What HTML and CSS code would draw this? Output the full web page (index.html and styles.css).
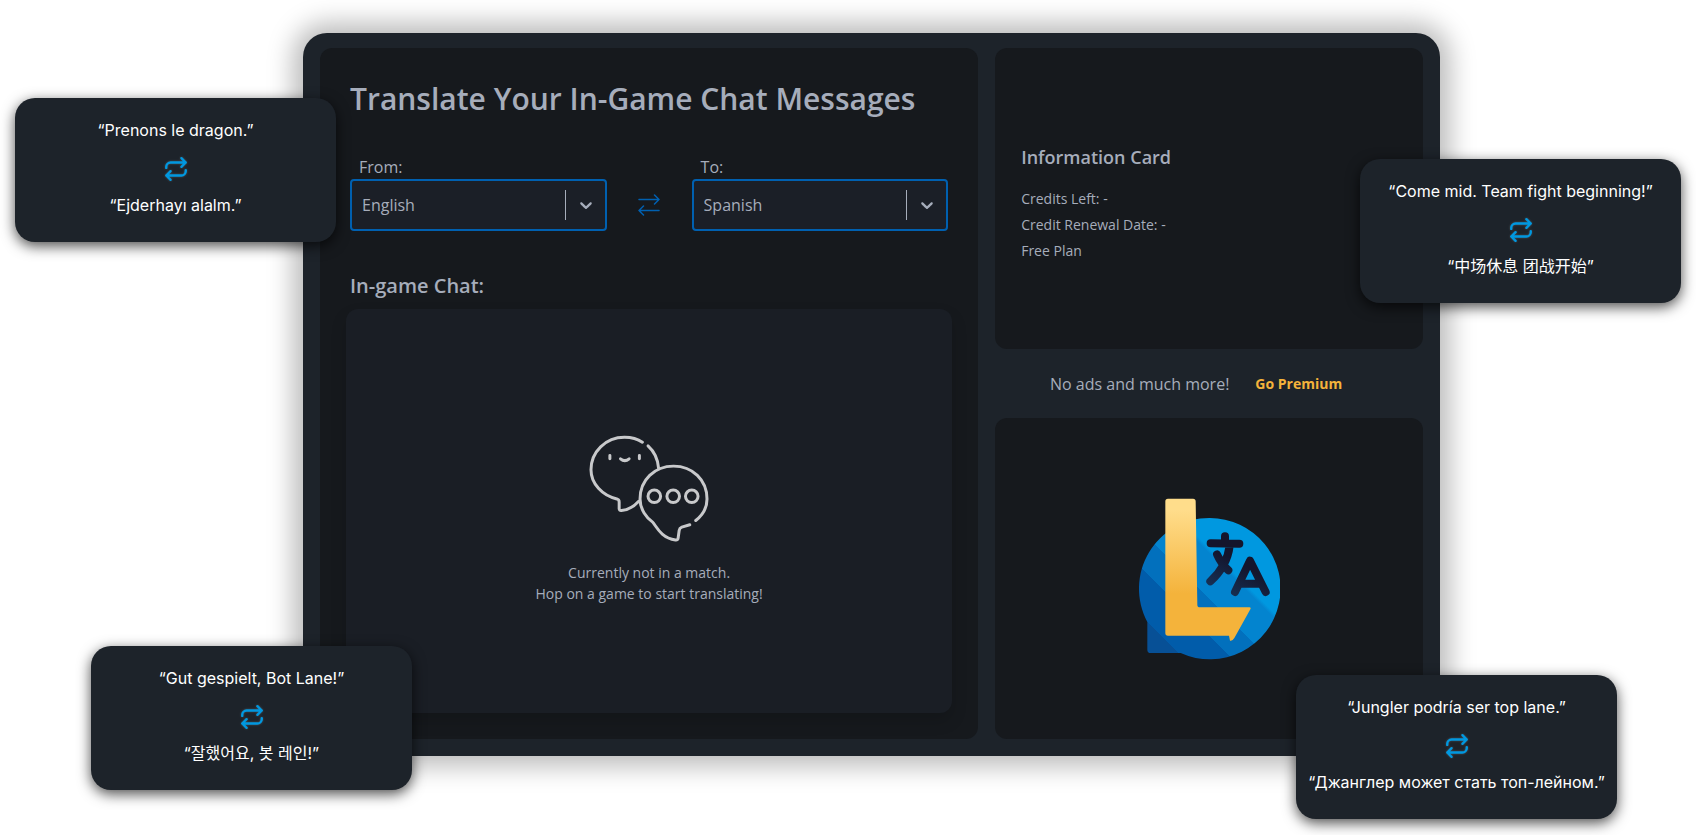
FILE: index.html
```html
<!DOCTYPE html>
<html lang="en">
<head>
  <meta charset="UTF-8" />
  <meta name="viewport" content="width=device-width, initial-scale=1.0" />
  <title>Translate Your In-Game Chat Messages</title>
  <link rel="stylesheet" href="styles.css">
</head>
<body>
  <!-- shared icons -->
  <svg class="sprite" aria-hidden="true">
    <symbol id="icon-repeat" viewBox="0 0 24 24">
      <path d="m17 2 4 4-4 4M3 11v-1a4 4 0 0 1 4-4h14M7 22l-4-4 4-4M21 13v1a4 4 0 0 1-4 4H3" fill="none" stroke="currentColor" stroke-width="2.2" stroke-linecap="round" stroke-linejoin="round"/>
    </symbol>
    <symbol id="icon-chevron" viewBox="0 0 20 20">
      <path fill="currentColor" d="M4.516 7.548c0.436-0.446 1.043-0.481 1.576 0l3.908 3.747 3.908-3.747c0.533-0.481 1.141-0.446 1.574 0 0.436 0.445 0.408 1.197 0 1.615-0.406 0.418-4.695 4.502-4.695 4.502-0.217 0.223-0.502 0.335-0.787 0.335s-0.57-0.112-0.789-0.335c0 0-4.287-4.084-4.695-4.502s-0.436-1.17 0-1.615z"/>
    </symbol>
  </svg>

  <div class="hero">
    <div class="app">
      <main class="panel translate">
        <h1>Translate Your In-Game Chat Messages</h1>

        <form class="languages">
          <div class="field">
            <label for="from">From:</label>
            <div class="select-box">
              <select id="from">
                <option>English</option>
                <option>Spanish</option>
              </select>
              <svg class="chevron" aria-hidden="true"><use href="#icon-chevron"/></svg>
            </div>
          </div>
          <button type="button" class="swap" aria-label="Swap languages">
            <svg viewBox="0 0 22 22" fill="none" stroke="currentColor" stroke-width="1.5" stroke-linecap="round" stroke-linejoin="round">
              <path d="M1 5.500h20M16.500 1l4.500 4.500-4.500 4.500M21 16.500H1M5.500 12L1 16.500 5.500 21"/>
            </svg>
          </button>
          <div class="field">
            <label for="to">To:</label>
            <div class="select-box">
              <select id="to">
                <option>Spanish</option>
                <option>English</option>
              </select>
              <svg class="chevron" aria-hidden="true"><use href="#icon-chevron"/></svg>
            </div>
          </div>
        </form>

        <h2>In-game Chat:</h2>
        <div class="chat">
          <svg class="bubbles" viewBox="88 73 362 324" fill="none" stroke="currentColor" stroke-width="9" stroke-linecap="round" stroke-linejoin="round" aria-hidden="true">
            <path d="M249 97C232 85 214 82 195 82C138 82 94 126 94 180C94 222 128 258 172 268Q179 270 179 277V297Q179 304 186 303Q216 300 238 275"/>
            <path d="M266 108Q295 134 298 176"/>
            <path d="M410 333C432 316 444 292 444 268C444 210 400 169 343 169C286 169 242 210 242 268C242 300 262 325 280 338C292 352 305 385 349 392Q356 393 357 385L360 363Q361 356 368 353L392 346"/>
            <circle cx="285" cy="260" r="19"/>
            <circle cx="342" cy="260" r="19"/>
            <circle cx="398" cy="260" r="19"/>
            <path d="M151 137v10M240 137v10M183 147Q196 158 209 147"/>
          </svg>
          <p>Currently not in a match.<br>Hop on a game to start translating!</p>
        </div>
      </main>

      <aside class="side">
        <section class="panel info">
          <h2>Information Card</h2>
          <p>Credits Left: -</p>
          <p>Credit Renewal Date: -</p>
          <p>Free Plan</p>
        </section>

        <div class="premium">
          <span>No ads and much more!</span>
          <a href="#">Go Premium</a>
        </div>

        <section class="panel brand">
          <svg class="logo" viewBox="84 52 426 486" role="img" aria-label="Logo">
            <defs>
              <linearGradient id="blue" gradientUnits="userSpaceOnUse" x1="500" y1="100" x2="100" y2="500">
                <stop offset="0.38" stop-color="#0098e0"/>
                <stop offset="0.4" stop-color="#0384cf"/>
                <stop offset="0.57" stop-color="#0384cf"/>
                <stop offset="0.57" stop-color="#0270bd"/>
                <stop offset="0.71" stop-color="#0270bd"/>
                <stop offset="0.71" stop-color="#015caa"/>
                <stop offset="0.89" stop-color="#015caa"/>
                <stop offset="0.89" stop-color="#075096"/>
              </linearGradient>
              <linearGradient id="gold" gradientUnits="userSpaceOnUse" x1="0" y1="60" x2="0" y2="340">
                <stop offset="0.1" stop-color="#ffdd8b"/>
                <stop offset="1" stop-color="#f4b33b"/>
              </linearGradient>
              <linearGradient id="ink" gradientUnits="userSpaceOnUse" x1="400" y1="190" x2="310" y2="350">
                <stop offset="0.3" stop-color="#14152c"/>
                <stop offset="1" stop-color="#17375f"/>
              </linearGradient>
            </defs>
            <path fill="url(#blue)" d="M298 112A212 212 0 1 1 212 517H122Q112 517 112 507V424A212 212 0 0 1 298 112Z"/>
            <path fill="url(#gold)" d="M174 54H249Q257 54 257 62L262 372Q262 380 270 380H418Q424 380 421 386L373 472Q367 482 360 480L357 465H174Q166 465 166 457V62Q166 54 174 54Z"/>
            <g fill="none" stroke="url(#ink)" stroke-width="24" stroke-linecap="round" stroke-linejoin="round">
              <path d="M345 167V186M302 188L388 189M359 195Q352 255 301 302M321 221Q334 250 355 269"/>
              <path d="M375 334L420 240L467 334M396 309H448"/>
            </g>
          </svg>
        </section>
      </aside>

      <!-- floating translations -->
      <div class="bubble bubble-french">
        <p>“Prenons le dragon.”</p>
        <svg><use href="#icon-repeat"/></svg>
        <p lang="tr">“Ejderhayı alalm.”</p>
      </div>
      <div class="bubble bubble-english">
        <p>“Come mid. Team fight beginning!”</p>
        <svg><use href="#icon-repeat"/></svg>
        <p lang="zh">“中场休息 团战开始”</p>
      </div>
      <div class="bubble bubble-german">
        <p>“Gut gespielt, Bot Lane!”</p>
        <svg><use href="#icon-repeat"/></svg>
        <p lang="ko">“잘했어요, 봇 레인!”</p>
      </div>
      <div class="bubble bubble-spanish">
        <p>“Jungler podría ser top lane.”</p>
        <svg><use href="#icon-repeat"/></svg>
        <p lang="ru">“Джанглер может стать топ-лейном.”</p>
      </div>
    </div>
  </div>
</body>
</html>
```
FILE: styles.css
```css
* {
  box-sizing: border-box;
}

body {
  margin: 0;
  background-color: #fff;
  color: #a6adbb;
  font-family: "Segoe UI", "Open Sans", "Noto Sans", sans-serif;
  font-size: 16px;
  overflow-x: hidden;
}

h1, h2, p {
  margin: 0;
}

.sprite {
  display: none;
}

.hero {
  display: grid;
  grid-template-columns: 303fr 1137fr 256fr;
  padding: 33px 0 79px;
}

.app {
  grid-column: 2;
  position: relative;
  display: grid;
  grid-template-columns: 20fr 13fr;
  gap: 17px;
  padding: 15px 17px 17px;
  background-color: #1d232a;
  border-radius: 24px;
  box-shadow: 0 0 26px 10px rgba(0, 0, 0, 0.27);
}

.panel {
  background-color: #16191d;
  border-radius: 12px;
}

.translate {
  display: flex;
  flex-direction: column;
  padding: 26px;
}

h1 {
  padding: 0 4px;
  font-size: 30px;
  line-height: 50px;
  font-weight: 600;
}

h2 {
  font-size: 20px;
  line-height: 28px;
  font-weight: 600;
}

.languages {
  display: grid;
  grid-template-columns: 1fr 85px 1fr;
  align-items: end;
  padding: 0 4px;
  margin-top: 31px;
}

.field label {
  display: block;
  padding-left: 9px;
  line-height: 24px;
}

.select-box {
  position: relative;
}

.select-box select {
  appearance: none;
  display: block;
  width: 100%;
  height: 52px;
  padding: 0 50px 0 10px;
  border: 2px solid #0060b0;
  border-radius: 4px;
  background-color: #1b1f27;
  color: inherit;
  font: inherit;
}

.chevron {
  position: absolute;
  top: 11px;
  right: 11px;
  width: 31px;
  height: 30px;
  padding: 5px 0 5px 10px;
  border-left: 1px solid #a6adbb;
  pointer-events: none;
}

.swap {
  height: 52px;
  padding: 0;
  border: none;
  background: none;
  color: #0060b0;
  cursor: pointer;
}

.swap svg {
  display: block;
  width: 22px;
  height: 22px;
  margin: 0 auto;
}

.translate h2 {
  padding: 0 4px;
  margin: 41px 0 9px;
}

.chat {
  flex: 1;
  display: flex;
  flex-direction: column;
  align-items: center;
  justify-content: center;
  gap: 20px;
  min-height: 404px;
  padding-top: 15px;
  background-color: #1a1e25;
  border-radius: 12px;
  box-shadow: 0 8px 16px rgba(0, 0, 0, 0.15);
  font-size: 14px;
  line-height: 21px;
  text-align: center;
}

.bubbles {
  width: 120px;
  height: 108px;
  color: #c8c9cb;
}

.side {
  display: grid;
  grid-template-rows: 301fr 69px 321fr;
}

.info {
  display: flex;
  flex-direction: column;
  justify-content: center;
  padding: 34px 26px 24px;
  font-size: 14px;
  line-height: 26px;
}

.info h2 {
  margin-bottom: 15px;
  font-size: 18px;
}

.premium {
  display: flex;
  align-items: center;
  justify-content: center;
  gap: 26px;
  padding-right: 26px;
}

.premium a {
  color: #f4b33b;
  font-size: 14px;
  font-weight: 700;
  text-decoration: none;
}

.brand {
  display: flex;
  align-items: center;
  justify-content: center;
}

.logo {
  width: 142px;
  height: 162px;
}

.bubble {
  position: absolute;
  display: flex;
  flex-direction: column;
  align-items: center;
  width: 321px;
  padding: 20px 0 25px;
  border-radius: 20px;
  background-color: #1d232a;
  box-shadow: 0 4px 14px rgba(0, 0, 0, 0.7);
  color: #fff;
  font-family: Inter, "Noto Sans CJK SC", sans-serif;
  font-size: 16px;
  line-height: 24px;
  white-space: nowrap;
}

.bubble p:lang(ko) {
  font-family: Inter, "Noto Sans CJK KR", sans-serif;
}

.bubble svg {
  width: 26px;
  height: 26px;
  margin: 14px 0 11px;
  color: #0098e0;
  filter: drop-shadow(0 0 1px rgba(255, 255, 255, 0.2));
}

.bubble-french {
  top: 65px;
  right: calc(100% - 33px);
}

.bubble-english {
  top: 126px;
  left: calc(100% - 80px);
}

.bubble-german {
  bottom: -34px;
  right: calc(100% - 109px);
}

.bubble-spanish {
  bottom: -63px;
  left: calc(100% - 144px);
}
```
